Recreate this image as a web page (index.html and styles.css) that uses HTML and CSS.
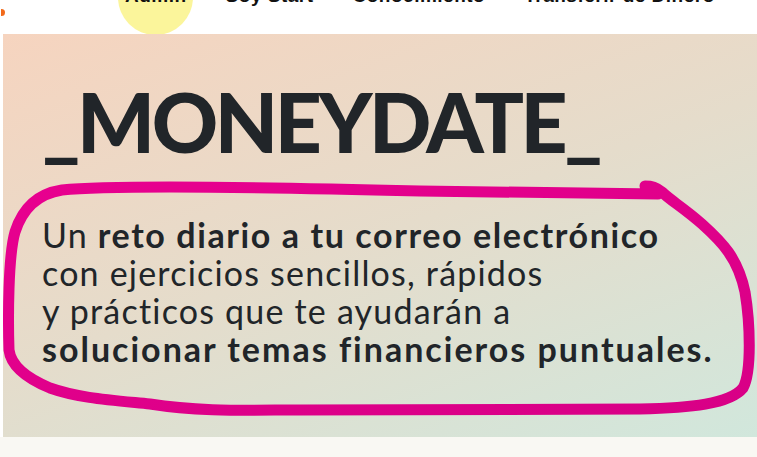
FILE: index.html
```html
<!DOCTYPE html>
<html lang="es">
<head>
<meta charset="utf-8">
<title>Moneydate</title>
<link rel="stylesheet" href="styles.css">
</head>
<body>
<header class="topbar">
  <span class="brand-mark"></span>
  <nav class="nav">
    <a class="nav-item nav-item--active" href="#">Admin</a>
    <a class="nav-item" href="#">Soy Start</a>
    <a class="nav-item" href="#">Conocimiento</a>
    <a class="nav-item" href="#">Transferir de Dinero</a>
    <a class="nav-item" href="#">Tienda</a>
  </nav>
</header>
<section class="hero">
  <h1 class="hero-title">_MONEYDATE_</h1>
  <p class="hero-text">Un <strong>reto diario a tu correo electrónico</strong><br>con ejercicios sencillos, rápidos<br>y prácticos que te ayudarán a<br><strong class="wide">solucionar temas financieros puntuales.</strong></p>
  <svg class="scribble" viewBox="3 34 754 403" preserveAspectRatio="none" aria-hidden="true">
    <defs>
      <linearGradient id="pink" x1="0" y1="0" x2="1" y2="1">
        <stop offset="0" stop-color="#e8008f"/>
        <stop offset="1" stop-color="#d80086"/>
      </linearGradient>
    </defs>
    <path d="M 658 194 L 420 191 C 300 188 120 184 62 190 C 36 194 22 210 15 232 C 8 256 8 320 9 350 C 11 366 26 378 50 388 C 78 398 110 400 150 404 C 200 412 250 410 300 410 L 640 409 C 690 408 730 404 743 388 C 752 372 750 322 745 292 C 738 258 722 242 702 224 C 684 208 670 200 662 192 C 656 187 652 186 645 186" fill="none" stroke="url(#pink)" stroke-width="11" stroke-linecap="round" stroke-linejoin="round"/>
  </svg>
</section>
<section class="below"></section>
</body>
</html>
```

FILE: styles.css
```css
html, body {
  margin: 0;
  padding: 0;
  background: #ffffff;
  font-family: "Lato", "Liberation Sans", sans-serif;
  color: #212529;
  overflow: hidden;
}

.topbar {
  height: 34px;
  background: #ffffff;
  display: flex;
  align-items: flex-start;
  position: relative;
}

.brand-mark {
  position: absolute;
  left: 1px;
  top: 9px;
  width: 4px;
  height: 7px;
  border-radius: 0 4px 4px 0;
  background: #f26a1b;
}

.nav {
  display: flex;
  gap: 39px;
  margin-left: 125px;
  margin-top: -12px;
}

.nav-item {
  font-family: "Liberation Sans", Arial, sans-serif;
  font-weight: 700;
  font-size: 19px;
  line-height: 16px;
  letter-spacing: 0.5px;
  color: #111111;
  text-decoration: none;
  white-space: nowrap;
  position: relative;
}

.nav-item--active::before {
  content: "";
  position: absolute;
  left: -7px;
  top: -28px;
  width: 75px;
  height: 75px;
  border-radius: 50%;
  background: #fbf59b;
  z-index: -1;
}

.nav-item--active {
  z-index: 0;
}

.hero {
  position: relative;
  margin-left: 3px;
  height: 403px;
  box-sizing: border-box;
  padding: 46px 0 0 39px;
  background: linear-gradient(160deg, #f6d4bf 0%, #e5dccb 50%, #d1e7dc 100%);
}

.hero-title {
  margin: 0;
  font-family: "Lato", sans-serif;
  font-weight: 900;
  font-size: 82px;
  line-height: 82px;
  letter-spacing: -3.4px;
  color: #212529;
}

.hero-text {
  margin: 54px 0 0 0;
  font-family: "Lato", sans-serif;
  font-weight: 400;
  font-size: 34px;
  line-height: 38px;
  letter-spacing: 1.2px;
  color: #212529;
}

.hero-text strong {
  font-weight: 700;
  letter-spacing: 1.6px;
}

.hero-text .wide {
  letter-spacing: 2px;
}

.scribble {
  position: absolute;
  left: 0;
  top: 0;
  width: 754px;
  height: 403px;
  pointer-events: none;
}

.below {
  height: 20px;
  background: #f9f8f3;
}
```
